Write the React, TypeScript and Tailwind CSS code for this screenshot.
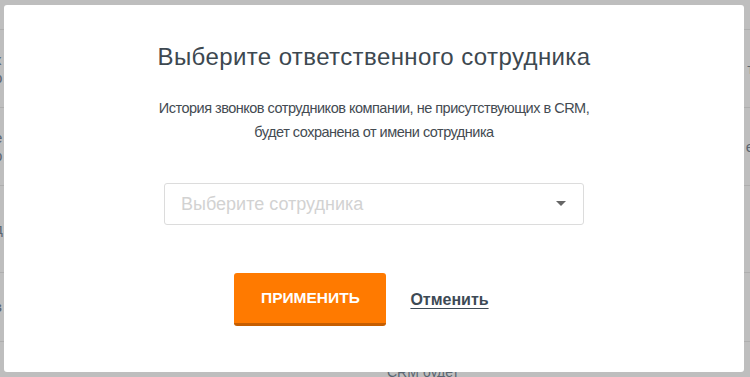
const rows = [
  { h: 'h-[30px]', left: [], right: [] },
  { h: 'h-[78px]', left: ['х', 'р'], right: ['т'] },
  { h: 'h-[78px]', left: ['е', 'р'], right: ['е'] },
  { h: 'h-[87px]', left: ['д'], right: [] },
  { h: 'h-[69px]', left: ['в'], right: [] },
]

function BackgroundTable() {
  return (
    <div className="flex flex-col">
      {rows.map((row, i) => (
        <div
          key={i}
          className={`${row.h} flex items-center justify-between border-b border-[#aeaeae] text-[15px] leading-[18px] text-[#5a6570]`}
        >
          <div className="flex flex-col -ml-[6px]">
            {row.left.map((t, j) => (
              <span key={j}>{t}</span>
            ))}
          </div>
          <div className="flex flex-col -mr-[4px]">
            {row.right.map((t, j) => (
              <span key={j}>{t}</span>
            ))}
          </div>
        </div>
      ))}
      <div className="pl-[387px] pt-[22px] text-[14px] leading-[16px] text-[#5a6570]">CRM будет</div>
    </div>
  )
}

export default function App() {
  return (
    <div
      className="relative w-[750px] h-[377px] overflow-hidden bg-[#bebebe]"
      style={{ fontFamily: '"Liberation Sans", Arial, sans-serif' }}
    >
      <BackgroundTable />
      <div className="absolute left-[4px] top-[5px] w-[740px] h-[367px] rounded-[3px] bg-white flex flex-col items-center">
        <h2 className="mt-[38px] text-[24px] leading-[28px] tracking-[0.4px] text-[#3d4850]">
          Выберите ответственного сотрудника
        </h2>
        <p className="mt-[25px] text-center text-[14.5px] leading-[24px] tracking-[-0.5px] text-[#444b52]">
          История звонков сотрудников компании, не присутствующих в CRM,
          <br />
          будет сохранена от имени сотрудника
        </p>
        <button className="mt-[39px] w-[420px] h-[42px] flex items-center justify-between rounded-[3px] border border-[#dcdcdc] bg-white pl-[16px] pr-[17px] text-left">
          <span className="text-[18px] text-[#d2d2d2]">Выберите сотрудника</span>
          <svg width="10" height="6" viewBox="0 0 10 6">
            <path d="M0 0 L10 0 L5 5 Z" fill="#666" />
          </svg>
        </button>
        <div className="mt-[48px] flex items-center gap-[24px] ml-[-25px]">
          <button className="w-[152px] h-[53px] rounded-[3px] bg-[#ff7a00] border-b-[3px] border-[#c65e00] text-white text-[15.5px] font-bold">
            ПРИМЕНИТЬ
          </button>
          <a className="text-[16px] font-bold text-[#3d4a55] underline underline-offset-[3px] cursor-pointer">
            Отменить
          </a>
        </div>
      </div>
    </div>
  )
}
